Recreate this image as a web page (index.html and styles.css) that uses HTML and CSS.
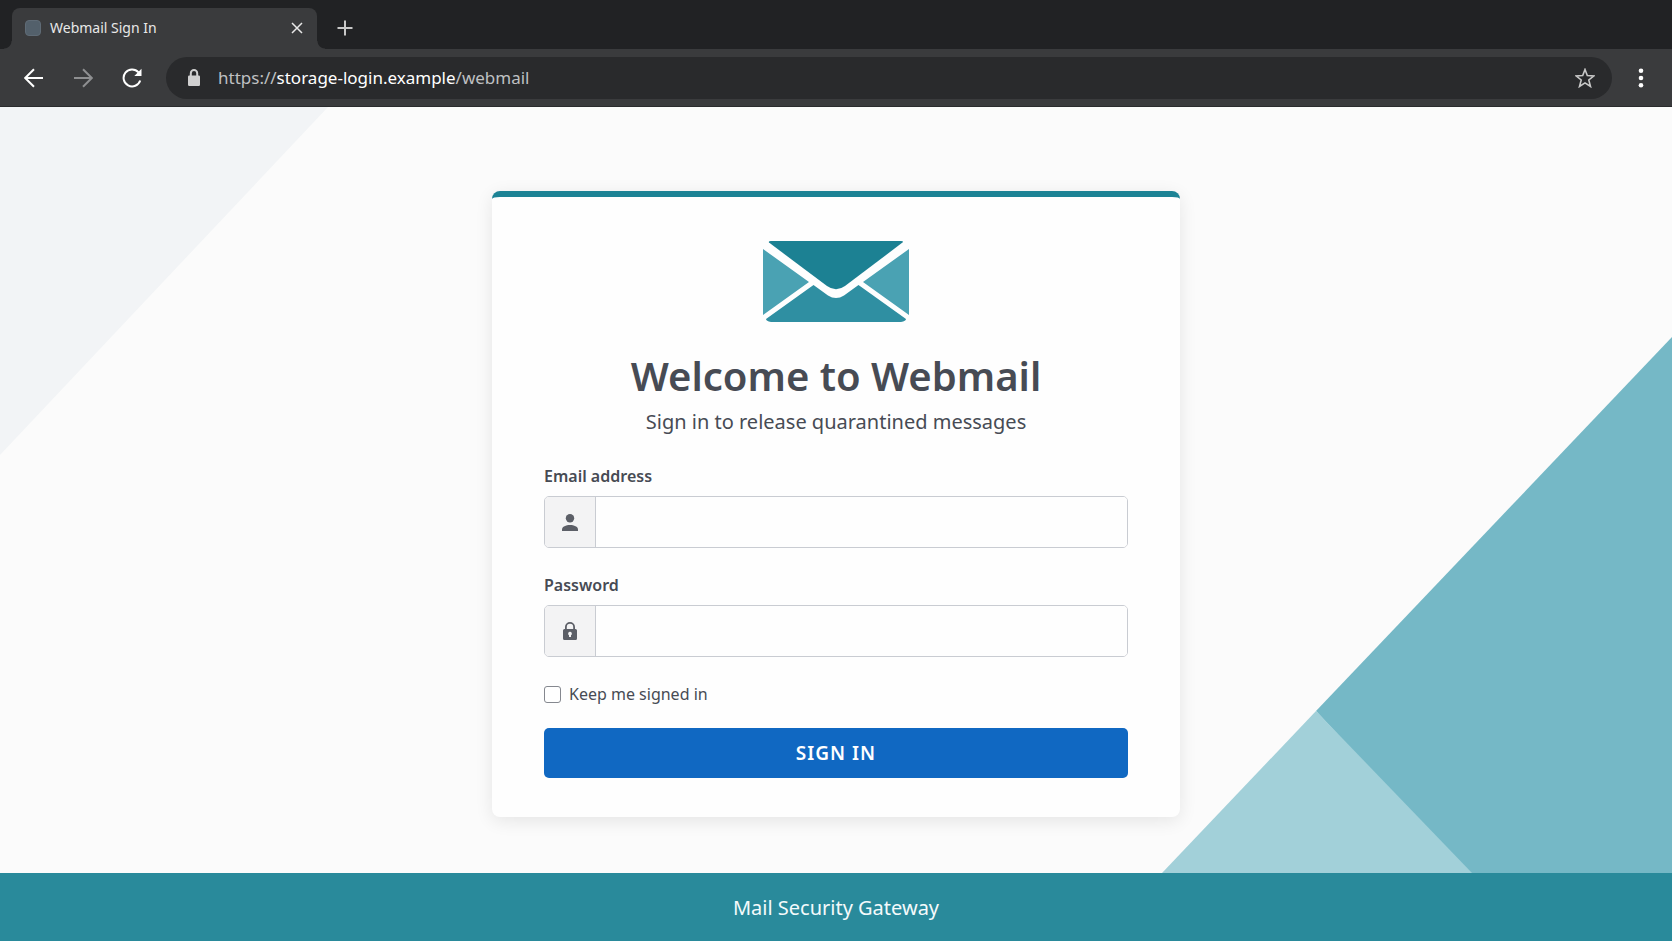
FILE: index.html
```
<!DOCTYPE html>
<html lang="en">
<head>
    <meta charset="UTF-8">
    <meta name="viewport" content="width=device-width, initial-scale=1">
    <title>Webmail Sign In</title>
    <link rel="stylesheet" href="styles.css">
</head>
<body>
<header class="browser">
    <div class="tabs">
        <div class="tab">
            <span class="favicon"></span>
            <span class="tab-title">Webmail Sign In</span>
            <button type="button" class="icon-btn tab-close" aria-label="Close tab">
                <svg width="12" height="12" viewBox="0 0 12 12"><path d="M1 1l10 10M11 1L1 11"/></svg>
            </button>
        </div>
        <button type="button" class="icon-btn tab-new" aria-label="New tab">
            <svg width="16" height="16" viewBox="0 0 16 16"><path d="M8 .5v15M.5 8h15"/></svg>
        </button>
    </div>
    <nav class="toolbar">
        <button type="button" class="icon-btn nav-btn" aria-label="Back">
            <svg width="20" height="20" viewBox="0 0 20 20"><path d="M19 10H1.5M10 1.2L1.2 10l8.8 8.8"/></svg>
        </button>
        <button type="button" class="icon-btn nav-btn dim" aria-label="Forward">
            <svg width="20" height="20" viewBox="0 0 20 20"><path d="M1 10h17.5M10 1.2l8.8 8.8-8.8 8.8"/></svg>
        </button>
        <button type="button" class="icon-btn nav-btn" aria-label="Reload">
            <svg width="20" height="20" viewBox="0 0 20 20"><path d="M18.200 12.500A8.500 8.500 0 1 1 16.500 4.300"/><path class="solid" d="M19.500 .8v7.200h-7.200z"/></svg>
        </button>
        <div class="address">
            <svg class="address-lock" width="12" height="17" viewBox="0 0 12 17"><path class="solid" d="M1.2 6.5h9.6A1.2 1.2 0 0 1 12 7.7v8.1a1.2 1.2 0 0 1-1.2 1.2H1.2A1.2 1.2 0 0 1 0 15.800V7.700A1.2 1.2 0 0 1 1.200 6.500z"/><path d="M2.800 7V4.200a3.200 3.200 0 0 1 6.400 0V7"/></svg>
            <span class="url">https://<b>storage-login.example</b>/webmail</span>
            <button type="button" class="icon-btn star" aria-label="Bookmark">
                <svg width="20" height="20" viewBox="0 0 20 20"><path d="M10 1.500l2.300 6 6.600.4-5.100 4.100 1.700 6.500-5.500-3.600-5.500 3.600 1.700-6.500L1.100 7.900l6.600-.4z"/></svg>
            </button>
        </div>
        <button type="button" class="icon-btn menu" aria-label="Menu">
            <svg width="6" height="20" viewBox="0 0 6 20"><g class="solid"><circle cx="3" cy="2.800" r="2.300"/><circle cx="3" cy="10" r="2.300"/><circle cx="3" cy="17.200" r="2.300"/></g></svg>
        </button>
    </nav>
</header>

<main class="page">
    <svg class="shape shape-left" width="328" height="348" viewBox="0 0 328 348">
        <path fill="#f2f4f6" d="M0 0h328L0 348z"/>
    </svg>
    <svg class="shape shape-right" width="510" height="536" viewBox="0 0 510 536">
        <path fill="#75b8c6" d="M510 0v536H304L154 374z"/>
        <path fill="#a2d0d9" d="M154 374l156 162H0z"/>
    </svg>

    <form class="card">
        <svg class="envelope" width="146" height="81" viewBox="0 0 146 81">
            <path fill="#1c8193" d="M8 0h130q3 0 1.500 1.600L82 45q-9 6.500-18 0L6 1.600Q5 0 8 0z"/>
            <path fill="#4aa2b3" d="M0 8l46 33L0 74zM146 8l-46 33 46 33z"/>
            <path fill="#2f8fa2" d="M50.500 44l14.500 10.500q8 5 16 0L95.500 44 143 78q0 2-5 3H8q-5-1-5-3z"/>
        </svg>
        <h1>Welcome to Webmail</h1>
        <p class="intro">Sign in to release quarantined messages</p>

        <div class="field">
            <label for="email">Email address</label>
            <div class="input-group">
                <span class="addon">
                    <svg width="16" height="17" viewBox="0 0 16 17"><circle cx="8" cy="4.300" r="4.200"/><path d="M0 17v-1.500C0 12.700 4 11 8 11s8 1.700 8 4.500V17z"/></svg>
                </span>
                <input type="email" id="email" name="email">
            </div>
        </div>
        <div class="field">
            <label for="password">Password</label>
            <div class="input-group">
                <span class="addon">
                    <svg width="14" height="18" viewBox="0 0 14 18"><path fill-rule="evenodd" d="M1.500 7H2V5a5 5 0 0 1 10 0v2h.5A1.500 1.500 0 0 1 14 8.500v8a1.500 1.500 0 0 1-1.500 1.500h-11A1.500 1.500 0 0 1 0 16.500v-8A1.500 1.500 0 0 1 1.500 7zM3.800 7h6.400V5a3.200 3.200 0 0 0-6.400 0zM7 9.800a1.900 1.900 0 0 0-1 3.500V15h2v-1.700a1.900 1.900 0 0 0-1-3.500z"/></svg>
                </span>
                <input type="password" id="password" name="password">
            </div>
        </div>

        <label class="keep"><input type="checkbox" name="keep">Keep me signed in</label>
        <button type="button" class="submit">SIGN IN</button>
    </form>
</main>

<footer class="footer">Mail Security Gateway</footer>
</body>
</html>
```
FILE: styles.css
```
* {
    box-sizing: border-box;
}
body {
    display: flex;
    flex-direction: column;
    min-height: 100vh;
    margin: 0;
    font-family: "Noto Sans", "Open Sans", sans-serif;
    color: #474b54;
    background: #fbfbfb;
}

/* browser bar */
.browser {
    background: #3a3b3d;
    color: #e8e8e8;
}
.icon-btn {
    display: flex;
    padding: 0;
    border: 0;
    background: none;
    color: inherit;
    cursor: pointer;
}
.browser svg {
    fill: none;
    stroke: currentColor;
    stroke-width: 2;
}
.browser .solid {
    fill: currentColor;
    stroke: none;
}
.tabs {
    display: flex;
    align-items: center;
    gap: 20px;
    height: 49px;
    padding: 8px 12px 0;
    background: #212224;
}
.tab {
    position: relative;
    display: flex;
    align-items: center;
    gap: 9px;
    width: 305px;
    height: 41px;
    padding: 0 14px 2px 13px;
    border-radius: 8px 8px 0 0;
    background: #3a3b3d;
}
/* the curved feet of the open tab */
.tab::before,
.tab::after {
    content: "";
    position: absolute;
    bottom: 0;
    width: 8px;
    height: 8px;
}
.tab::before {
    right: 100%;
    background: radial-gradient(circle at 0 0, #212224 7px, #3a3b3d 8px);
}
.tab::after {
    left: 100%;
    background: radial-gradient(circle at 100% 0, #212224 7px, #3a3b3d 8px);
}
.favicon {
    width: 16px;
    height: 16px;
    border: 1px solid #5f6b76;
    border-radius: 4px;
    background: #53606b;
}
.tab-title {
    flex: 1;
    font-size: 14px;
}
.browser .tab-close svg {
    stroke-width: 1.5;
}
.tab-new {
    padding-bottom: 2px;
    color: #c8c8c8;
}
.toolbar {
    display: flex;
    align-items: center;
    height: 58px;
    padding: 0 28px 0 24px;
    border-bottom: 1px solid #2a2b2d;
}
.nav-btn {
    margin-right: 29px;
    color: #fff;
}
.nav-btn.dim {
    color: #8e8f91;
}
.address {
    display: flex;
    flex: 1;
    align-items: center;
    height: 42px;
    margin-right: 26px;
    margin-left: -5px;
    padding: 0 17px 0 22px;
    border-radius: 21px;
    background: #292a2c;
}
.address-lock {
    margin-right: 18px;
    color: #d0d0d0;
}
.url {
    flex: 1;
    font-size: 17px;
    color: #bfc0c2;
}
.url b {
    font-weight: 400;
    color: #fff;
}
.star {
    color: #c8c8c8;
}
.browser .star svg {
    stroke-width: 1.6;
}
.menu {
    color: #fff;
}

/* sign in page */
.page {
    position: relative;
    display: flex;
    flex: 1;
    justify-content: center;
    align-items: flex-start;
    padding: 84px 20px 48px;
    overflow: hidden;
}
.shape {
    position: absolute;
}
.shape-left {
    top: 0;
    left: 0;
}
.shape-right {
    right: 0;
    bottom: 0;
}
.card {
    position: relative;
    display: flex;
    flex-direction: column;
    width: 100%;
    max-width: 688px;
    padding: 44px 52px 39px;
    border-top: 6px solid #1c8395;
    border-radius: 8px;
    background: #fefefe;
    box-shadow: 0 4px 18px rgba(0, 0, 0, .09);
}
.envelope {
    align-self: center;
}
h1 {
    margin: 26px 0 0;
    font-size: 40px;
    font-weight: 600;
    line-height: 56px;
    text-align: center;
}
.intro {
    margin: 0 0 24px;
    font-size: 20px;
    line-height: 36px;
    text-align: center;
}
.field {
    margin-bottom: 25px;
}
.field label {
    display: block;
    margin-bottom: 8px;
    font-size: 16px;
    font-weight: 600;
    line-height: 24px;
}
.input-group {
    display: flex;
    height: 52px;
    border: 1px solid #c9ccd2;
    border-radius: 5px;
    overflow: hidden;
}
.addon {
    display: flex;
    justify-content: center;
    align-items: center;
    width: 51px;
    border-right: 1px solid #c9ccd2;
    background: #f3f3f4;
}
.addon svg {
    fill: #5c5f67;
}
.input-group input {
    flex: 1;
    min-width: 0;
    padding: 0 14px;
    border: 0;
    font: inherit;
    color: inherit;
    background: #fefefe;
}
.keep {
    display: flex;
    align-items: center;
    align-self: flex-start;
    gap: 8px;
    font-size: 16px;
    line-height: 24px;
}
.keep input {
    appearance: none;
    width: 17px;
    height: 17px;
    margin: 0;
    border: 1px solid #85888f;
    border-radius: 3px;
    background: #fff;
}
.keep input:checked {
    background: #1068c2;
}
.submit {
    height: 50px;
    margin-top: 22px;
    border: 0;
    border-radius: 5px;
    font: 600 19px "Noto Sans", "Open Sans", sans-serif;
    letter-spacing: 1px;
    color: #fff;
    background: #1068c2;
    cursor: pointer;
}
.footer {
    padding: 19px 20px 17px;
    font-size: 20px;
    line-height: 32px;
    text-align: center;
    color: #f4fafb;
    background: #298a9b;
}
```
